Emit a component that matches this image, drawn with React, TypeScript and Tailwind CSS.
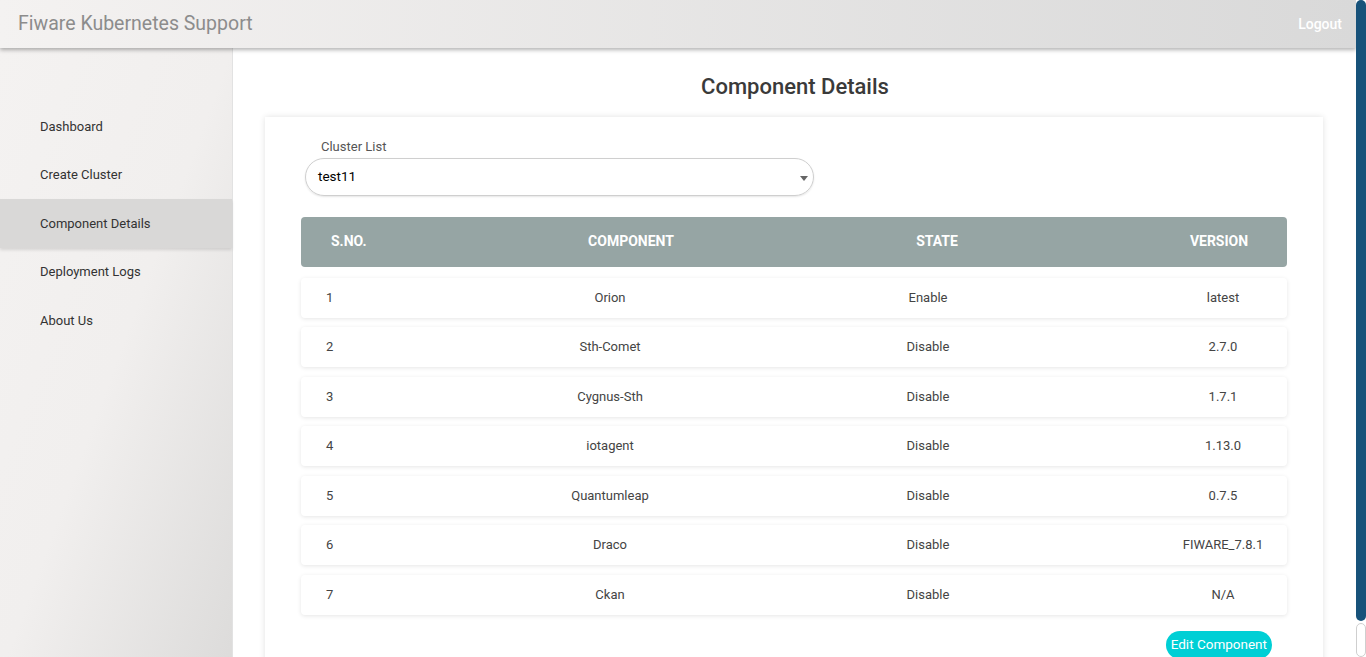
import React from "react";

const rows = [
  { no: 1, name: "Orion", state: "Enable", version: "latest" },
  { no: 2, name: "Sth-Comet", state: "Disable", version: "2.7.0" },
  { no: 3, name: "Cygnus-Sth", state: "Disable", version: "1.7.1" },
  { no: 4, name: "iotagent", state: "Disable", version: "1.13.0" },
  { no: 5, name: "Quantumleap", state: "Disable", version: "0.7.5" },
  { no: 6, name: "Draco", state: "Disable", version: "FIWARE_7.8.1" },
  { no: 7, name: "Ckan", state: "Disable", version: "N/A" },
];

const menu = ["Dashboard", "Create Cluster", "Component Details", "Deployment Logs", "About Us"];

export default function App() {
  return (
    <div className="min-h-screen bg-white font-['Roboto',sans-serif] text-[#333]">
      {/* Header */}
      <header className="relative z-20 flex h-12 items-center justify-between bg-gradient-to-r from-[#f4f2f1] to-[#d9d9d9] pl-[18px] pr-[14px] shadow-[0_2px_4px_rgba(0,0,0,0.3)] w-[1356px]">
        <h1 className="text-[19.5px] text-[#8c8c8c]">Fiware Kubernetes Support</h1>
        <button className="text-[14px] font-medium text-white">Logout</button>
      </header>

      <div className="flex w-[1356px]">
        {/* Sidebar */}
        <aside className="min-h-[609px] w-[233px] shrink-0 border-r border-[#e2e2e2] bg-gradient-to-br from-[#f4f2f1] via-[#f1efee] to-[#dcdbda] pt-[54px]">
          {menu.map((m) => (
            <div
              key={m}
              className={
                m === "Component Details"
                  ? "flex h-[48.5px] items-center bg-[#d9d8d7] pl-10 text-[13px] text-[#333] shadow-[0_2px_3px_rgba(0,0,0,0.12)]"
                  : "flex h-[48.5px] items-center pl-10 text-[13px] text-[#333]"
              }
            >
              {m}
            </div>
          ))}
        </aside>

        {/* Main */}
        <main className="flex-1 pt-[25px]">
          <h2 className="text-center text-[22px] font-medium leading-[28px] text-[#3a3a3a]">Component Details</h2>
          <div className="ml-8 mr-[34px] mt-[16px] bg-white px-9 pt-[20px] pb-4 shadow-[0_0_6px_rgba(0,0,0,0.12)]">
            <label className="block pl-5 text-[13px] text-[#555]">Cluster List</label>
            <div className="relative ml-1 mt-[1px] flex h-[38px] w-[509px] items-center rounded-full border border-[#cfcfcf] pl-3 text-[13.5px] text-black shadow-[0_1px_2px_rgba(0,0,0,0.1)]">
              test11
              <span className="absolute right-[5px] top-[17px] h-0 w-0 border-x-[4px] border-t-[5px] border-x-transparent border-t-[#666]" />
            </div>

            <div className="mt-[21px] grid h-[50px] grid-cols-[238px_184px_428px_136px] items-center rounded bg-[#96a5a4] text-[14px] font-bold text-white">
              <div className="pl-[30px]">S.NO.</div>
              <div className="text-center">COMPONENT</div>
              <div className="text-center">STATE</div>
              <div className="text-center">VERSION</div>
            </div>

            <div className="mt-[11px] flex flex-col gap-[9.5px]">
              {rows.map((r) => (
                <div
                  key={r.no}
                  className="grid h-10 grid-cols-[222px_174px_462px_128px] items-center rounded bg-white text-[13px] text-[#444] shadow-[0_1px_4px_rgba(0,0,0,0.1)]"
                >
                  <div className="pl-[25px]">{r.no}</div>
                  <div className="text-center">{r.name}</div>
                  <div className="text-center">{r.state}</div>
                  <div className="text-center">{r.version}</div>
                </div>
              ))}
            </div>

            <div className="mt-[16px] flex justify-end pr-[15px]">
              <button className="h-7 rounded-full bg-[#00cfd5] px-[5px] text-[13.5px] text-white">Edit Component</button>
            </div>
          </div>
        </main>
      </div>

      {/* Scrollbar */}
      <div className="fixed right-0 top-0 z-30 h-[657px] w-[10px] bg-white">
        <div className="absolute inset-x-0 top-0 h-[621px] rounded-full bg-[#17527a]" />
        <div className="absolute inset-x-0 bottom-0 top-[623px] rounded-full border border-[#cfcfcf] bg-white" />
      </div>
    </div>
  );
}
